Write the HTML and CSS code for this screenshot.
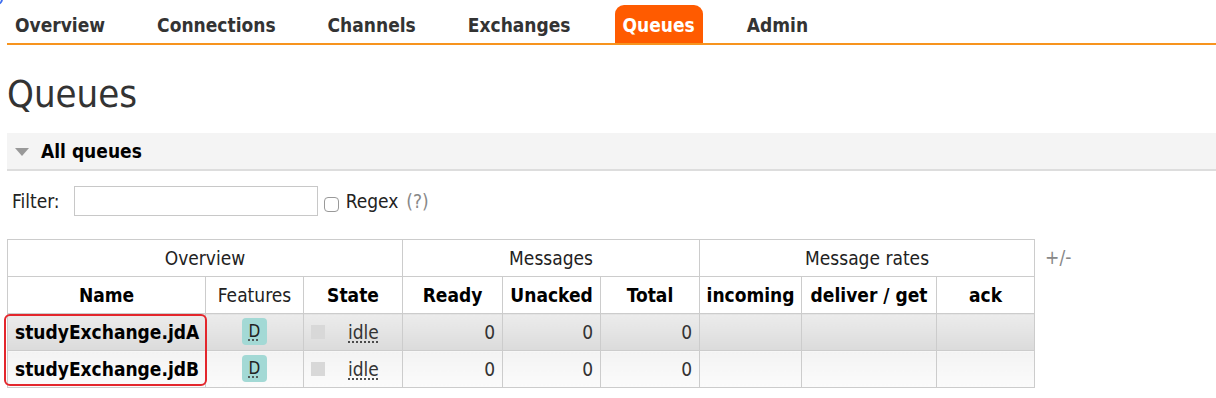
FILE: index.html
```html
<!DOCTYPE html>
<html lang="en">
<head>
<meta charset="utf-8">
<title>Queues</title>
<link rel="stylesheet" href="styles.css">
</head>
<body>
<div class="corner-mark"></div>
<div class="page">
  <nav class="menu">
    <ul>
      <li><a>Overview</a></li>
      <li><a>Connections</a></li>
      <li><a>Channels</a></li>
      <li><a>Exchanges</a></li>
      <li class="active"><a>Queues</a></li>
      <li><a>Admin</a></li>
    </ul>
  </nav>

  <h1 class="title">Queues</h1>

  <section class="section">
    <div class="section-head">
      <span class="tri"></span>
      <h2>All queues</h2>
    </div>

    <div class="filter">
      <label class="filter-label">Filter:</label>
      <input class="filter-input" type="text">
      <input class="cb" type="checkbox">
      <span class="regex">Regex</span>
      <span class="help">(?)</span>
    </div>

    <div class="table-row">
      <div class="table-box">
        <table class="list">
          <colgroup>
            <col class="c-name"><col class="c-feat"><col class="c-state">
            <col class="c-ready"><col class="c-unacked"><col class="c-total">
            <col class="c-in"><col class="c-deliver"><col class="c-ack">
          </colgroup>
          <thead>
            <tr class="group">
              <th colspan="3">Overview</th>
              <th colspan="3">Messages</th>
              <th colspan="3">Message rates</th>
            </tr>
            <tr class="cols">
              <th>Name</th>
              <th class="plain">Features</th>
              <th>State</th>
              <th>Ready</th>
              <th>Unacked</th>
              <th>Total</th>
              <th>incoming</th>
              <th>deliver / get</th>
              <th>ack</th>
            </tr>
          </thead>
          <tbody>
            <tr class="alt1">
              <td class="name">studyExchange.jdA</td>
              <td class="center"><abbr class="badge">D</abbr></td>
              <td class="state"><span class="sq"></span><abbr class="idle">idle</abbr></td>
              <td class="num">0</td>
              <td class="num">0</td>
              <td class="num">0</td>
              <td></td><td></td><td></td>
            </tr>
            <tr class="alt2">
              <td class="name">studyExchange.jdB</td>
              <td class="center"><abbr class="badge">D</abbr></td>
              <td class="state"><span class="sq"></span><abbr class="idle">idle</abbr></td>
              <td class="num">0</td>
              <td class="num">0</td>
              <td class="num">0</td>
              <td></td><td></td><td></td>
            </tr>
          </tbody>
        </table>
        <div class="highlight"></div>
      </div>
      <span class="plusminus">+/-</span>
    </div>
  </section>
</div>
</body>
</html>
```

FILE: styles.css
```css
* { box-sizing: border-box; }

html, body {
  margin: 0;
  padding: 0;
  background: #fff;
}

body {
  font-family: "DejaVu Sans Condensed", "DejaVu Sans", Verdana, sans-serif;
  font-stretch: condensed;
  font-size: 19px;
  color: #333;
  width: 1216px;
  height: 398px;
  overflow: hidden;
  position: relative;
}

.corner-mark {
  position: absolute;
  left: -20px;
  top: -20px;
  width: 23px;
  height: 25px;
  border: 2px solid #3d6ef0;
  border-radius: 6px;
}

.page {
  padding: 5px 0 0 7px;
}

/* nav */
.menu ul {
  list-style: none;
  margin: 0;
  padding: 0;
  display: flex;
  gap: 36px;
  border-bottom: 2px solid #f7941e;
}

.menu li a {
  display: block;
  padding: 9px 8px 7px;
  line-height: 22px;
  font-weight: bold;
  color: #333;
  border-radius: 9px 9px 0 0;
}

.menu li.active a {
  background: #ff5b00;
  color: #fff;
}

/* title */
.title {
  margin: 27px 0 17px;
  font-size: 38px;
  line-height: 44px;
  font-weight: normal;
  color: #333;
}

/* section */
.section-head {
  display: flex;
  align-items: center;
  background: #f4f4f4;
  border-bottom: 2px solid #ddd;
  padding: 7px 0 7px 8px;
}

.tri {
  width: 0;
  height: 0;
  border-left: 7.5px solid transparent;
  border-right: 7.5px solid transparent;
  border-top: 8px solid #999;
  margin-right: 12px;
  margin-top: 2px;
}

.section-head h2 {
  margin: 0;
  font-size: 19px;
  line-height: 22px;
  font-weight: bold;
  color: #000;
}

/* filter */
.filter {
  display: flex;
  align-items: flex-start;
  padding: 15px 0 0 5px;
  height: 60px;
}

.filter-label {
  line-height: 30px;
  color: #222;
  margin-right: 14px;
}

.filter-input {
  width: 244px;
  height: 30px;
  border: 1px solid #c8c8c8;
  margin: 0;
  padding: 0 4px;
  background: #fff;
}

.cb {
  appearance: none;
  -webkit-appearance: none;
  width: 15px;
  height: 15px;
  margin: 11px 7px 0 6px;
  border: 1px solid #999;
  border-radius: 4px;
  background: #fff;
}

.regex {
  line-height: 30px;
  color: #222;
  margin-right: 8px;
}

.help {
  line-height: 30px;
  color: #888;
}

/* table */
.table-row {
  display: flex;
  align-items: flex-start;
  gap: 10px;
  padding-top: 8px;
}

.table-box {
  position: relative;
}

table.list {
  border-collapse: collapse;
  table-layout: fixed;
  width: 1027px;
}

.c-name { width: 198px; }
.c-feat { width: 98px; }
.c-state { width: 99px; }
.c-ready { width: 100px; }
.c-unacked { width: 98px; }
.c-total { width: 99px; }
.c-in { width: 102px; }
.c-deliver { width: 135px; }
.c-ack { width: 98px; }

table.list th,
table.list td {
  border: 1px solid #ccc;
  padding: 7px 7px;
  line-height: 22px;
  height: 37px;
  white-space: nowrap;
  vertical-align: middle;
}

table.list th {
  text-align: center;
  background: #fff;
  color: #000;
  font-weight: bold;
  padding-left: 2px;
  padding-right: 2px;
}

table.list tr.group th,
table.list th.plain {
  font-weight: normal;
  color: #222;
}

table.list tr.alt1 td {
  background: linear-gradient(#ececec, #dbdbdb);
}

table.list tr.alt2 td {
  background: linear-gradient(#f3f3f3, #fbfbfb);
}

td.name {
  font-weight: bold;
  color: #000;
  padding-left: 6px;
}

td.center { text-align: center; }

td.num {
  text-align: right;
  padding-right: 8px;
  color: #333;
}

.badge {
  display: inline-block;
  width: 25px;
  height: 27px;
  line-height: 26px;
  margin: -3px 0 -2px;
  text-align: center;
  background: #a3d9d5;
  border-radius: 4px;
  color: #222;
  font-size: 17px;
  text-decoration: underline dotted #444;
  text-underline-offset: 3px;
  vertical-align: top;
}

td.state {
  padding-left: 7px;
}

.sq {
  display: inline-block;
  width: 14px;
  height: 14px;
  background: #d8d8d8;
  vertical-align: top;
  margin: 4px 23px 0 0;
}

.idle {
  color: #333;
  text-decoration: underline dotted #444;
  text-underline-offset: 3px;
}

.highlight {
  position: absolute;
  left: -3px;
  top: 75px;
  width: 203px;
  height: 72px;
  border: 2px solid #e3262c;
  border-radius: 6px;
  pointer-events: none;
}

.plusminus {
  color: #888;
  line-height: 22px;
  margin-top: 7px;
}
```
